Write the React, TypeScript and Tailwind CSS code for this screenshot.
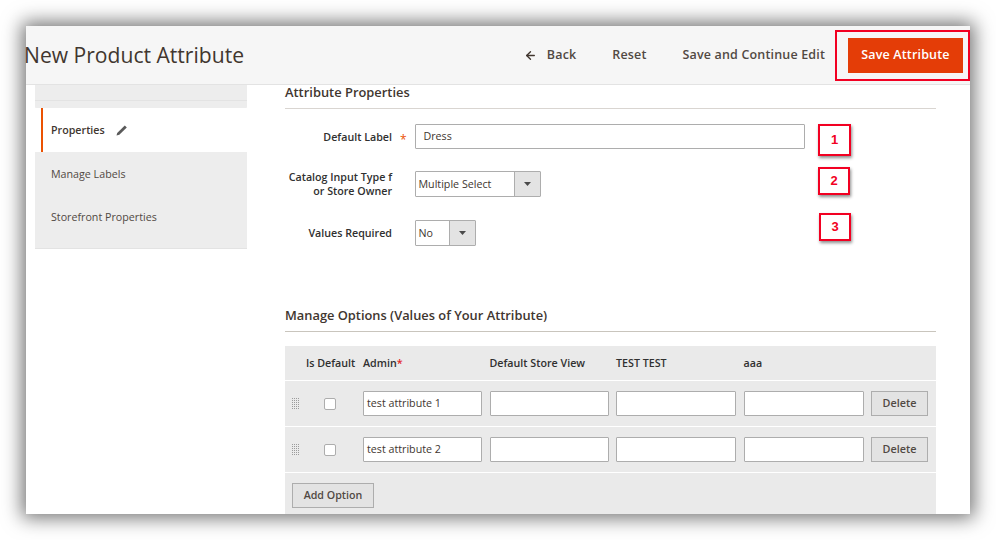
import React from 'react';
import { ArrowLeft } from 'lucide-react';

const SansFont = "[font-family:'Open_Sans',sans-serif]";

const Caret = () => (
  <svg width="7" height="4" viewBox="0 0 7 4" className="text-[#4a4a4a]">
    <path d="M0 0h7L3.500 4z" fill="currentColor" />
  </svg>
);

const Select: React.FC<{ value: string; width: string }> = ({ value, width }) => (
  <div className={`${width} h-[26px] flex bg-white border border-[#adadad] rounded-[1px] text-[10.7px] text-[#41362f]`}>
    <div className="flex-1 flex items-center pl-[3px]">{value}</div>
    <div className="w-[26px] flex items-center justify-center bg-[#e3e3e3] border-l border-[#adadad]">
      <Caret />
    </div>
  </div>
);

const FormRow: React.FC<{ label: React.ReactNode; required?: boolean; children: React.ReactNode; className?: string }> = ({ label, required, children, className }) => (
  <div className={`flex items-center ${className ?? ''}`}>
    <div className="w-[107px] text-right text-[10.7px] leading-[14px] font-semibold text-[#303030]">{label}</div>
    <div className="w-[22.500px] pl-[8px] pt-[6px] text-[#eb5202] text-[12px] leading-none">{required ? '*' : ''}</div>
    {children}
  </div>
);

const DragHandle = () => (
  <svg width="8" height="11" viewBox="0 0 8 11" className="text-[#9b9b9b]">
    {[0, 2, 4, 6].flatMap((x) =>
      [0, 2, 4, 6, 8, 10].map((y) => <rect key={`${x}-${y}`} x={x} y={y} width="1" height="1" fill="currentColor" />)
    )}
  </svg>
);

const TextCell: React.FC<{ value?: string }> = ({ value }) => (
  <div className="w-full h-[25px] flex items-center px-[3px] bg-white border border-[#adadad] rounded-[1px] text-[10.7px] text-[#41362f]">
    {value}
  </div>
);

const OptionRow: React.FC<{ value: string }> = ({ value }) => (
  <div className="h-[46px] grid grid-cols-[70.500px_119px_119px_120px_120px_57px] gap-x-[7.500px] items-center border-t border-white">
    <div className="flex items-center pl-[7px]">
      <DragHandle />
      <div className="ml-[23.500px] w-[12px] h-[12px] bg-white border border-[#adadad] rounded-[2px]" />
    </div>
    <TextCell value={value} />
    <TextCell />
    <TextCell />
    <TextCell />
    <div className="h-[25px] flex items-center justify-center bg-[#e3e3e3] border border-[#adadad] text-[10.8px] font-semibold text-[#514943]">
      Delete
    </div>
  </div>
);

const Callout: React.FC<{ n: number; className: string }> = ({ n, className }) => (
  <div className={`absolute flex items-center justify-center bg-white border-[2.500px] border-[#f20022] shadow-[1px_2px_3px_rgba(0,0,0,0.45)] text-[#f20022] text-[13px] font-bold [font-family:'Liberation_Sans',sans-serif] ${className}`}>
    {n}
  </div>
);

export default function App() {
  return (
    <div className={`relative w-[996px] h-[540px] overflow-hidden bg-white pt-[26px] pl-[26px] ${SansFont}`}>
      <div className="relative w-[944px] h-[488px] bg-white flex flex-col shadow-[0_0_18px_4px_rgba(0,0,0,0.55)]">
        {/* Page header */}
        <header className="h-[59px] flex-shrink-0 flex items-center bg-[#f6f6f6] border-b border-[#e3e3e3]">
          <h1 className="-ml-[2px] text-[21.100px] text-[#41362f] leading-[26px] whitespace-nowrap">New Product Attribute</h1>
          <div className="ml-auto pt-[1px] flex items-center text-[12.500px] font-semibold text-[#514943] tracking-[0.16px]">
            <ArrowLeft size={13} strokeWidth={2.5} className="text-[#41362f]" />
            <span className="ml-[10px]">Back</span>
            <span className="ml-[36px]">Reset</span>
            <span className="ml-[36px]">Save and Continue Edit</span>
            <div className="ml-[23px] mr-[7px] w-[115px] h-[35px] flex items-center justify-center bg-[#e43d07] text-white">
              Save Attribute
            </div>
          </div>
        </header>

        <div className="flex-1 flex">
          {/* Left tabs */}
          <aside className="w-[212px] ml-[9px] flex-shrink-0 flex flex-col">
            <div className="h-[16px] bg-[#ededed] border-b border-[#e3e3e3]" />
            <div className="h-[7px] bg-[#ededed] rounded-b-[1px]" />
            <div className="h-[44px] flex items-center ml-[6px] pl-[8px] bg-white border-l-2 border-[#eb5202] text-[10.7px] font-semibold text-[#41362f]">
              Properties
              <svg width="12" height="11" viewBox="0 0 12 11" className="ml-[11px] text-[#5a5a5a]">
                <path d="M0.500 10.500l0.700-2.600L8.800 0.600l2 1.900-7.500 7.200z" fill="currentColor" />
              </svg>
            </div>
            <div className="h-[97px] bg-[#ededed] border-b border-[#e3e3e3] flex flex-col pl-[16px] text-[10.7px] text-[#514943]">
              <div className="h-[43.500px] flex items-center">Manage Labels</div>
              <div className="h-[43.500px] flex items-center">Storefront Properties</div>
            </div>
          </aside>

          {/* Form */}
          <main className="ml-[38px] w-[651px] flex-shrink-0 flex flex-col">
            <h2 className="h-[24px] text-[12.900px] leading-[14px] font-semibold text-[#41362f] border-b border-[#d9d5d1]">
              Attribute Properties
            </h2>
            <FormRow label="Default Label" required className="mt-[15px]">
              <div className="w-[390px] h-[25px] flex items-center px-[8px] bg-white border border-[#adadad] rounded-[1px] text-[10.7px] text-[#41362f]">
                Dress
              </div>
            </FormRow>
            <FormRow label={<>Catalog Input Type f<br />or Store Owner</>} className="mt-[21px]">
              <Select value="Multiple Select" width="w-[126px]" />
            </FormRow>
            <FormRow label="Values Required" className="mt-[22px]">
              <Select value="No" width="w-[61px]" />
            </FormRow>

            <h2 className="mt-[61px] h-[25px] text-[12.850px] leading-[16px] font-semibold text-[#41362f] border-b border-[#c9c5bd]">
              Manage Options (Values of Your Attribute)
            </h2>
            <div className="mt-[14px] flex-1 bg-[#eaeaea]">
              <div className="h-[34px] grid grid-cols-[70.500px_119px_119px_120px_120px_57px] gap-x-[7.500px] items-center text-[10.7px] font-semibold text-[#303030]">
                <div className="pl-[21px] whitespace-nowrap">Is Default</div>
                <div>Admin<span className="text-[#e22626]">*</span></div>
                <div>Default Store View</div>
                <div>TEST TEST</div>
                <div>aaa</div>
                <div />
              </div>
              <OptionRow value="test attribute 1" />
              <OptionRow value="test attribute 2" />
              <div className="border-t border-white pl-[7px] pt-[10px]">
                <div className="w-[82px] h-[25px] flex items-center justify-center bg-[#e3e3e3] border border-[#adadad] text-[10.7px] font-semibold text-[#514943]">
                  Add Option
                </div>
              </div>
            </div>
          </main>
        </div>
      </div>

      {/* Annotations drawn over the screenshot */}
      <div className="absolute left-[835px] top-[30px] w-[135px] h-[51px] border-2 border-[#f20022]" />
      <Callout n={1} className="left-[818px] top-[124px] w-[33px] h-[32px]" />
      <Callout n={2} className="left-[818px] top-[167px] w-[32px] h-[28px]" />
      <Callout n={3} className="left-[819px] top-[213px] w-[32px] h-[28px]" />
    </div>
  );
}
